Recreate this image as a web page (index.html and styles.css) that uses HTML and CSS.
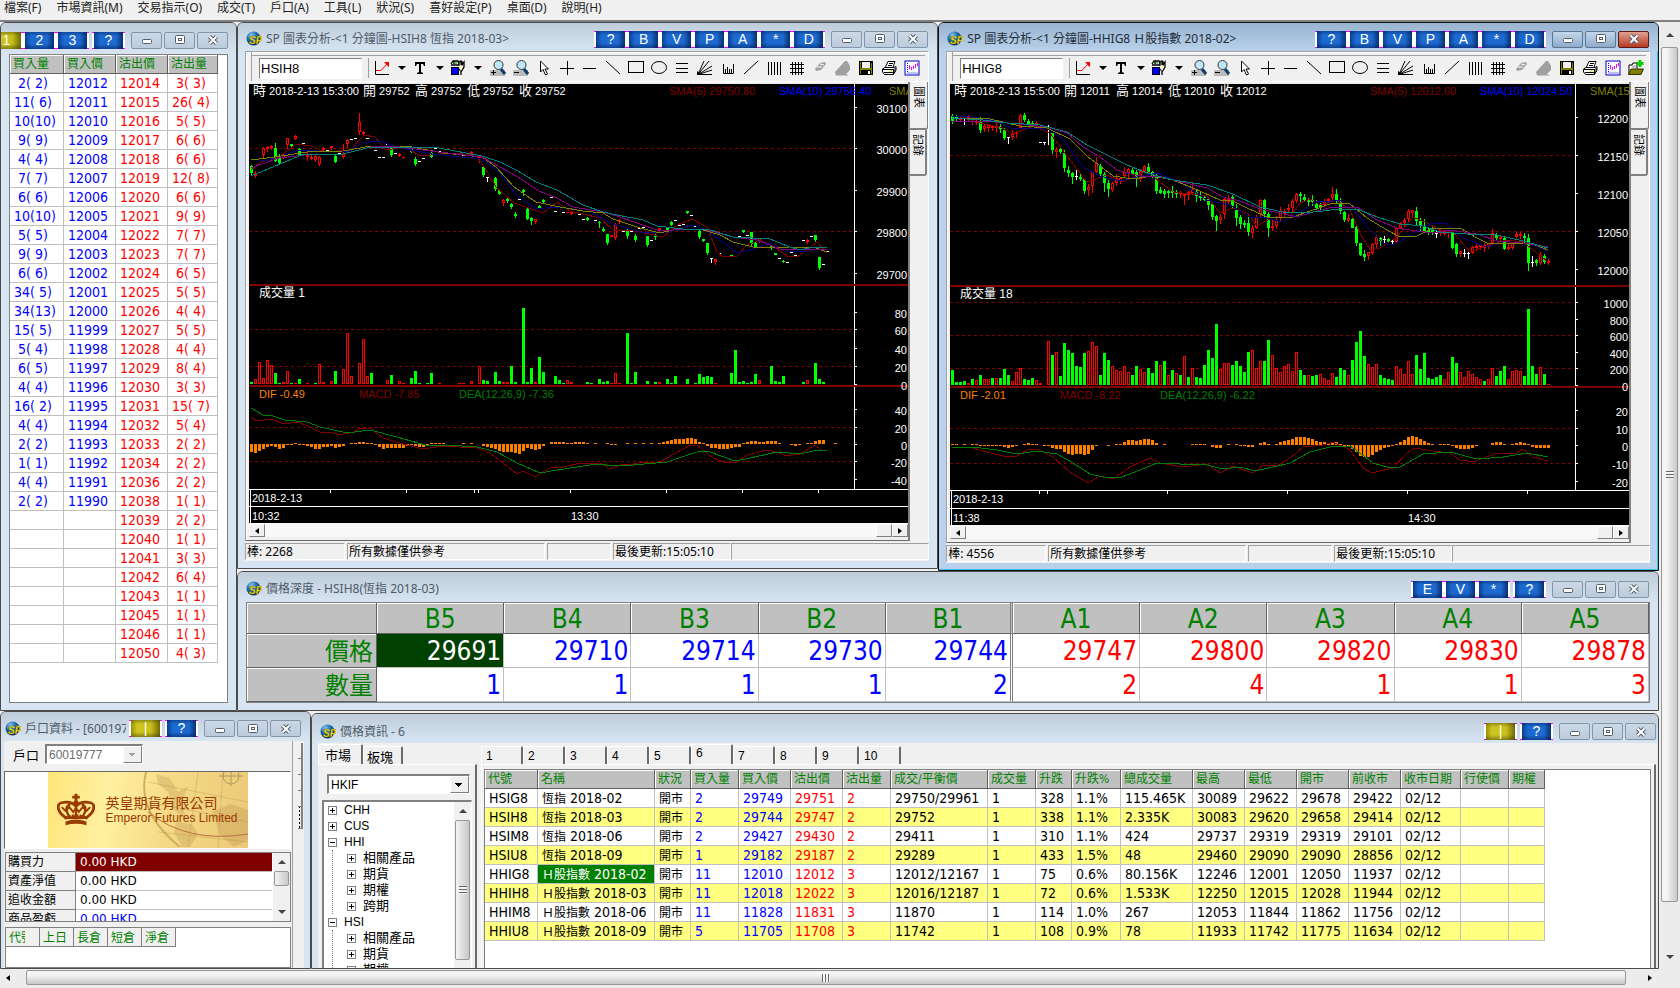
FILE: index.html
```html
<!DOCTYPE html>
<html lang="zh-Hant">

<head>
  <meta charset="UTF-8">
  <meta name="viewport" content="width=device-width, initial-scale=1.0">
  <title>SP 交易平台</title>
  <link rel="stylesheet" href="styles.css">
</head>

<body>
  <svg width="0" height="0" class="defs">
    <defs>
      <radialGradient id="ball" cx="35%" cy="25%" r="80%">
        <stop offset="0" stop-color="#7fc4ee" />
        <stop offset="0.5" stop-color="#1c62a8" />
        <stop offset="1" stop-color="#06244f" />
      </radialGradient>
    </defs>
    <symbol id="logo" viewBox="0 0 16 16">
      <circle cx="7.5" cy="7.5" r="7" fill="url(#ball)" />
      <text x="3" y="13" font-family="Liberation Sans, sans-serif" font-size="10" font-weight="bold" font-style="italic" fill="#ffe600" stroke="#7a6a00" stroke-width="0.3">SP</text>
    </symbol>
    <symbol id="min" viewBox="0 0 12 10"><rect x="1.5" y="4.5" width="9" height="4" rx="1" fill="#fff" stroke="#535e6b" /></symbol>
    <symbol id="max" viewBox="0 0 12 10"><rect x="1.5" y="0.5" width="9" height="8" rx="1" fill="#fff" stroke="#535e6b" /><rect x="4.5" y="3.5" width="3" height="2" fill="#fff" stroke="#535e6b" /></symbol>
    <symbol id="close" viewBox="0 0 12 10"><path d="M2.5 1.5L9.500 8.500M9.500 1.500L2.500 8.500" stroke="#535e6b" stroke-width="4" /><path d="M2.500 1.500L9.500 8.500M9.500 1.500L2.500 8.500" stroke="#fff" stroke-width="2" /></symbol>
    <symbol id="i-trend" viewBox="0 0 16 16"><path d="M1.500 1V14.500H15" fill="none" stroke="#000" /><path d="M2 10.500H7L13 4" fill="none" stroke="#f00" /><path d="M10 2h5v5l-2-1.500l-1.500-2z" fill="#f00" /></symbol>
    <symbol id="i-text" viewBox="0 0 16 16"><path d="M3 2H13V6H12L11 4H9V12L11 13V14H5V13L7 12V4H5L4 6H3z" /></symbol>
    <symbol id="i-tools" viewBox="0 0 16 16"><path d="M1 4L3 1H8L9 4M1 5H9M4 1V4M9 6V2L11 1V5L12 1V5L14 2V7L11 12V15M8 8L11 11" fill="none" stroke="#000" stroke-width="1.300" /><rect x="1.500" y="7.500" width="7" height="7" fill="#00f" stroke="#000" /><path d="M3 3H7" stroke="#008000" /><path d="M10 5L13 6L11 11L9 8Z" fill="#fff8c0" /></symbol>
    <symbol id="i-zoomin" viewBox="0 0 16 16"><rect x="0" y="10" width="15" height="6" fill="#bbb" /><path d="M11 9L15 14" stroke="#123b6b" stroke-width="3" /><circle cx="8.500" cy="5" r="4.500" fill="#bfe8fb" stroke="#333" /><path d="M1 12.500H6M3.500 10V15" stroke="#000" /></symbol>
    <symbol id="i-zoomout" viewBox="0 0 16 16"><rect x="0" y="10" width="15" height="6" fill="#bbb" /><path d="M11 9L15 14" stroke="#123b6b" stroke-width="3" /><circle cx="8.500" cy="5" r="4.500" fill="#bfe8fb" stroke="#333" /><path d="M1 12.500H6" stroke="#000" /></symbol>
    <symbol id="i-cursor" viewBox="0 0 16 16"><path d="M4.500 1V12L7 9.500L9.500 15L11.500 14L9 9H12.500Z" fill="#fff" stroke="#000" /></symbol>
    <symbol id="i-cross" viewBox="0 0 16 16"><path d="M1 8.500H15M8.500 1V15" stroke="#000" /></symbol>
    <symbol id="i-hline" viewBox="0 0 16 16"><path d="M1 8.500H14" stroke="#000" /></symbol>
    <symbol id="i-down" viewBox="0 0 16 16"><path d="M1 1L15 14" stroke="#000" /></symbol>
    <symbol id="i-rect" viewBox="0 0 16 16"><rect x="0.500" y="1.500" width="15" height="11" fill="none" stroke="#000" /></symbol>
    <symbol id="i-oval" viewBox="0 0 16 16"><ellipse cx="8" cy="7.500" rx="7.500" ry="6" fill="none" stroke="#000" /></symbol>
    <symbol id="i-rows" viewBox="0 0 16 16"><path d="M2 3.500H14M2 8.500H14M2 12.500H14" stroke="#000" /></symbol>
    <symbol id="i-fan" viewBox="0 0 16 16"><path d="M1 14.500L7 1M1 14.500L12 1M1 14.500L15 6M1 14.500L15 10M1 14.500H15" stroke="#000" fill="none" /><path d="M0 15V11L6 15z" /></symbol>
    <symbol id="i-comb" viewBox="0 0 16 16"><path d="M3.500 4V13.500H13.500V4M5.500 9V13M7.500 7V13M9.500 9V13M11.500 9V13" stroke="#000" fill="none" /></symbol>
    <symbol id="i-up" viewBox="0 0 16 16"><path d="M1 14L15 1" stroke="#000" /></symbol>
    <symbol id="i-vbars" viewBox="0 0 16 16"><path d="M2.500 2V15M5.500 2V15M8.500 2V15M11.500 2V15M14.500 2V15" stroke="#000" /></symbol>
    <symbol id="i-grid" viewBox="0 0 16 16"><path d="M3.500 2V15M6.500 2V15M9.500 2V15M12.500 2V15M1 4.500H15M1 8.500H15M1 12.500H15" stroke="#000" /></symbol>
    <symbol id="i-rub" viewBox="0 0 16 16"><path d="M3 9L8 3L13 2L14 4L9 10L4 11Z" fill="#a0a0a0" /><path d="M5 7L10 7M8 4L12 5" stroke="#fff" /></symbol>
    <symbol id="i-rub2" viewBox="0 0 16 16"><path d="M0 12L10 1L12 1L15 6V10L11 14L14 15.500H1Z" fill="#a0a0a0" /></symbol>
    <symbol id="i-save" viewBox="0 0 16 16"><rect x="1" y="1" width="14" height="14" fill="#000" /><rect x="4" y="2" width="8" height="6" fill="#f0f0f0" /><path d="M2.500 2V14M13.500 3V14" stroke="#808000" /><rect x="2" y="8" width="12" height="2" fill="#808000" /><rect x="10" y="11" width="2" height="3" fill="#fff" /></symbol>
    <symbol id="i-print" viewBox="0 0 16 16"><path d="M4.500 7L7 1.500H14L12 7" fill="#fff" stroke="#000" /><path d="M8 3.500H12M7 5.500H11" stroke="#000" /><path d="M1.500 9L4 7.500H13L15 6.500V10L12.500 14.500H3.500L1.500 12Z" fill="#fff" stroke="#000" /><path d="M2 9.500H12.500M3 12.500H12M12.500 9V14M14 8V12" stroke="#000" /><path d="M8 11H11" stroke="#e0d000" /></symbol>
    <symbol id="i-candle" viewBox="0 0 16 16"><rect x="1" y="1" width="14" height="14" fill="#fff" stroke="#0000c0" /><path d="M3.500 3V13H14" stroke="#00f" fill="none" stroke-dasharray="1 1" /><path d="M5.500 5V9M7.500 7V10M9.500 6V9M11.500 4V8M13.500 3V6" stroke="#f0f" /></symbol>
    <symbol id="i-open" viewBox="0 0 16 16"><path d="M1 14V5H4L5 3H9V9" fill="#fff" stroke="#000" /><path d="M0.500 14.500L3 9H15.500L13 14.500Z" fill="#808000" stroke="#333300" /><path d="M4 6H9M4 8H9" stroke="#888" /><path d="M12 0V7M9 3.500H15.500" stroke="#00d000" stroke-width="3" /></symbol>
  </svg>

  <nav class="menu">
    <a href="#">檔案(F)</a>
    <a href="#">市場資訊(M)</a>
    <a href="#">交易指示(O)</a>
    <a href="#">成交(T)</a>
    <a href="#">戶口(A)</a>
    <a href="#">工具(L)</a>
    <a href="#">狀況(S)</a>
    <a href="#">喜好設定(P)</a>
    <a href="#">桌面(D)</a>
    <a href="#">說明(H)</a>
  </nav>

  <div class="workspace">
    <main class="desktop">
      <div class="upper">

        <!-- 買賣盤 -->
        <section class="win ladder">
          <header class="title">
            <div class="skins">
              <button class="skin gold">1</button><button class="skin">2</button><button class="skin">3</button>
            </div>
            <div class="skins"><button class="skin">?</button></div>
            <div class="ctrls">
              <button><svg><use href="#min" /></svg></button>
              <button><svg><use href="#max" /></svg></button>
              <button><svg><use href="#close" /></svg></button>
            </div>
          </header>
          <div class="sheet">
            <table class="grid">
              <thead>
                <tr><th>買入量</th><th>買入價</th><th>沽出價</th><th>沽出量</th></tr>
              </thead>
              <tbody id="ladder"></tbody>
            </table>
          </div>
        </section>

        <div class="right">
          <div class="charts">

            <!-- 恆指 -->
            <section class="win chart-a">
              <header class="title">
                <svg class="logo"><use href="#logo" /></svg>
                <h2>SP 圖表分析-&lt;1 分鐘圖-HSIH8 恆指 2018-03&gt;</h2>
                <div class="skins">
                  <button class="skin">?</button><button class="skin">B</button><button class="skin">V</button><button class="skin">P</button><button class="skin">A</button><button class="skin">*</button><button class="skin">D</button>
                </div>
                <div class="ctrls">
                  <button><svg><use href="#min" /></svg></button>
                  <button><svg><use href="#max" /></svg></button>
                  <button><svg><use href="#close" /></svg></button>
                </div>
              </header>
              <div class="client">
                <div class="toolbar">
                  <input type="text" value="HSIH8" aria-label="代號">
                  <i class="sep"></i>
                  <button class="drop"><svg><use href="#i-trend" /></svg></button>
                  <button class="drop"><svg><use href="#i-text" /></svg></button>
                  <button class="drop"><svg><use href="#i-tools" /></svg></button>
                  <button><svg><use href="#i-zoomin" /></svg></button>
                  <button><svg><use href="#i-zoomout" /></svg></button>
                  <button><svg><use href="#i-cursor" /></svg></button>
                  <button><svg><use href="#i-cross" /></svg></button>
                  <button><svg><use href="#i-hline" /></svg></button>
                  <button><svg><use href="#i-down" /></svg></button>
                  <button><svg><use href="#i-rect" /></svg></button>
                  <button><svg><use href="#i-oval" /></svg></button>
                  <button><svg><use href="#i-rows" /></svg></button>
                  <button><svg><use href="#i-fan" /></svg></button>
                  <button><svg><use href="#i-comb" /></svg></button>
                  <button><svg><use href="#i-up" /></svg></button>
                  <button><svg><use href="#i-vbars" /></svg></button>
                  <button><svg><use href="#i-grid" /></svg></button>
                  <button><svg><use href="#i-rub" /></svg></button>
                  <button><svg><use href="#i-rub2" /></svg></button>
                  <button><svg><use href="#i-save" /></svg></button>
                  <button><svg><use href="#i-print" /></svg></button>
                  <button><svg><use href="#i-candle" /></svg></button>
                </div>
                <div class="body">
                  <div class="pane">
                    <div class="chart" id="chartA"></div>
                    <div class="hbar"><button class="left"></button><button class="thumb"></button><button class="next"></button></div>
                  </div>
                  <div class="sidetabs"><button class="on">圖表</button><button>記錄</button></div>
                </div>
              </div>
              <footer class="status">
                <span>棒: 2268</span><span>所有數據僅供參考</span><span></span><span>最後更新:15:05:10</span><span></span>
              </footer>
            </section>

            <!-- H股指數 -->
            <section class="win active chart-b">
              <header class="title">
                <svg class="logo"><use href="#logo" /></svg>
                <h2>SP 圖表分析-&lt;1 分鐘圖-HHIG8 Ｈ股指數 2018-02&gt;</h2>
                <div class="skins">
                  <button class="skin">?</button><button class="skin">B</button><button class="skin">V</button><button class="skin">P</button><button class="skin">A</button><button class="skin">*</button><button class="skin">D</button>
                </div>
                <div class="ctrls">
                  <button><svg><use href="#min" /></svg></button>
                  <button><svg><use href="#max" /></svg></button>
                  <button class="red"><svg><use href="#close" /></svg></button>
                </div>
              </header>
              <div class="client">
                <div class="toolbar">
                  <input type="text" value="HHIG8" aria-label="代號">
                  <i class="sep"></i>
                  <button class="drop"><svg><use href="#i-trend" /></svg></button>
                  <button class="drop"><svg><use href="#i-text" /></svg></button>
                  <button class="drop"><svg><use href="#i-tools" /></svg></button>
                  <button><svg><use href="#i-zoomin" /></svg></button>
                  <button><svg><use href="#i-zoomout" /></svg></button>
                  <button><svg><use href="#i-cursor" /></svg></button>
                  <button><svg><use href="#i-cross" /></svg></button>
                  <button><svg><use href="#i-hline" /></svg></button>
                  <button><svg><use href="#i-down" /></svg></button>
                  <button><svg><use href="#i-rect" /></svg></button>
                  <button><svg><use href="#i-oval" /></svg></button>
                  <button><svg><use href="#i-rows" /></svg></button>
                  <button><svg><use href="#i-fan" /></svg></button>
                  <button><svg><use href="#i-comb" /></svg></button>
                  <button><svg><use href="#i-up" /></svg></button>
                  <button><svg><use href="#i-vbars" /></svg></button>
                  <button><svg><use href="#i-grid" /></svg></button>
                  <button><svg><use href="#i-rub" /></svg></button>
                  <button><svg><use href="#i-rub2" /></svg></button>
                  <button><svg><use href="#i-save" /></svg></button>
                  <button><svg><use href="#i-print" /></svg></button>
                  <button><svg><use href="#i-candle" /></svg></button>
                  <button><svg><use href="#i-open" /></svg></button>
                </div>
                <div class="body">
                  <div class="pane">
                    <div class="chart" id="chartB"></div>
                    <div class="hbar"><button class="left"></button><button class="thumb"></button><button class="next"></button></div>
                  </div>
                  <div class="sidetabs"><button class="on">圖表</button><button>記錄</button></div>
                </div>
              </div>
              <footer class="status">
                <span>棒: 4556</span><span>所有數據僅供參考</span><span></span><span>最後更新:15:05:10</span><span></span>
              </footer>
            </section>
          </div>

          <!-- 價格深度 -->
          <section class="win depth">
            <header class="title">
              <svg class="logo"><use href="#logo" /></svg>
              <h2>價格深度 - HSIH8(恆指 2018-03)</h2>
              <div class="skins"><button class="skin">E</button><button class="skin">V</button><button class="skin">*</button></div>
              <div class="skins"><button class="skin">?</button></div>
              <div class="ctrls">
                <button><svg><use href="#min" /></svg></button>
                <button><svg><use href="#max" /></svg></button>
                <button><svg><use href="#close" /></svg></button>
              </div>
            </header>
            <table>
              <thead>
                <tr><th class="side"></th><th>B5</th><th>B4</th><th>B3</th><th>B2</th><th>B1</th><th>A1</th><th>A2</th><th>A3</th><th>A4</th><th>A5</th></tr>
              </thead>
              <tbody>
                <tr><th class="side">價格</th><td class="cur">29691</td><td class="bid">29710</td><td class="bid">29714</td><td class="bid">29730</td><td class="bid">29744</td><td class="ask">29747</td><td class="ask">29800</td><td class="ask">29820</td><td class="ask">29830</td><td class="ask">29878</td></tr>
                <tr><th class="side">數量</th><td class="bid">1</td><td class="bid">1</td><td class="bid">1</td><td class="bid">1</td><td class="bid">2</td><td class="ask">2</td><td class="ask">4</td><td class="ask">1</td><td class="ask">1</td><td class="ask">3</td></tr>
              </tbody>
            </table>
          </section>
        </div>
      </div>

      <div class="lower">

        <!-- 戶口資料 -->
        <section class="win account">
          <header class="title">
            <svg class="logo"><use href="#logo" /></svg>
            <h2>戶口資料 - [60019777]</h2>
            <div class="skins"><button class="skin gold">|</button></div>
            <div class="skins"><button class="skin">?</button></div>
            <div class="ctrls">
              <button><svg><use href="#min" /></svg></button>
              <button><svg><use href="#max" /></svg></button>
              <button><svg><use href="#close" /></svg></button>
            </div>
          </header>
          <div class="acc-body">
            <div class="acc-main">
              <div class="acc-row">
                <label for="acc">戶口</label>
                <span class="combo off"><select id="acc" disabled><option>60019777</option></select></span>
              </div>
              <div class="banner">
                <div class="gold-card">
                  <svg class="map" viewBox="0 0 200 75">
                    <path d="M98 0Q88 40 132 75" fill="none" stroke="#d0b060" stroke-width="2" />
                    <path d="M108 2l14 4l8 14l10-6l-6 16l4 18l-12-10l-6-18l-10-8zM128 50l16 2l6 10l-8 13h-8l-8-14zM164 40l18-8l18 6v30l-14 7l-14-12z" fill="#a07038" opacity="0.2" />
                    <path d="M100 10L200 30M100 30L200 50M110 60L200 70M150 0L140 75M175 0L170 75" stroke="#b08840" stroke-width="0.300" />
                    <circle cx="183" cy="4" r="8" fill="none" stroke="#b09860" />
                    <path d="M183 -8V14M171 4H195" stroke="#b09860" />
                    <path d="M100 40Q140 72 200 62" fill="none" stroke="#b87040" />
                  </svg>
                  <svg class="crown" viewBox="0 0 40 34">
                    <path d="M9 25C-2 17 0 9 7 9C13 8 18 11 20 13C22 11 27 8 33 9C40 9 42 17 31 25Z" fill="none" stroke="#9a3a00" stroke-width="3" />
                    <path d="M9 29Q20 25 31 29L31 33Q20 30 9 33Z" fill="#9a3a00" />
                    <path d="M13 24C8 16 10 12 14 11M27 24C32 16 30 12 26 11M20 12V24" fill="none" stroke="#9a3a00" stroke-width="2.500" />
                    <path d="M5 14L9 18L13 14L17 19L20 15L23 19L27 14L31 18L35 14" fill="none" stroke="#9a3a00" stroke-width="2" />
                    <path d="M20 0V8M16 3.500H24" stroke="#9a3a00" stroke-width="3" />
                    <circle cx="20" cy="10" r="3" fill="#9a3a00" />
                    <path d="M8 26Q20 20 32 26" fill="none" stroke="#9a3a00" stroke-width="3" stroke-dasharray="3 1" />
                  </svg>
                  <p class="co">英皇期貨有限公司<br><span>Emperor Futures Limited</span></p>
                </div>
              </div>
              <div class="balance">
                <table>
                  <tr class="sel"><th>購買力</th><td>0.00 HKD</td></tr>
                  <tr><th>資產淨值</th><td>0.00 HKD</td></tr>
                  <tr><th>追收金額</th><td>0.00 HKD</td></tr>
                  <tr class="blue"><th>商品盈虧</th><td>0.00 HKD</td></tr>
                </table>
                <div class="vbar"><button class="up"></button><button class="thumb"></button><button class="dn"></button></div>
              </div>
              <div class="positions">
                <table>
                  <tr><th><div>代號</div></th><th>上日</th><th>長倉</th><th>短倉</th><th>淨倉</th></tr>
                </table>
              </div>
            </div>
            <div class="edge"><i></i><i></i><i></i><i></i><b></b></div>
          </div>
        </section>

        <!-- 價格資訊 -->
        <section class="win quotes">
          <header class="title">
            <svg class="logo"><use href="#logo" /></svg>
            <h2>價格資訊 - 6</h2>
            <div class="skins"><button class="skin gold">|</button></div>
            <div class="skins"><button class="skin">?</button></div>
            <div class="ctrls">
              <button><svg><use href="#min" /></svg></button>
              <button><svg><use href="#max" /></svg></button>
              <button><svg><use href="#close" /></svg></button>
            </div>
          </header>
          <div class="quotes-body">
            <aside class="market">
              <div class="tabs zh"><button class="on">市場</button><button>板塊</button></div>
              <div class="market-panel">
                <span class="combo"><select aria-label="市場"><option>HKIF</option></select></span>
                <div class="treebox">
                  <ul class="tree">
                    <li><button class="exp plus"></button>CHH</li>
                    <li><button class="exp plus"></button>CUS</li>
                    <li><button class="exp"></button>HHI
                      <ul>
                        <li><button class="exp plus"></button>相關產品</li>
                        <li><button class="exp plus"></button>期貨</li>
                        <li><button class="exp plus"></button>期權</li>
                        <li><button class="exp plus"></button>跨期</li>
                      </ul>
                    </li>
                    <li><button class="exp"></button>HSI
                      <ul>
                        <li><button class="exp plus"></button>相關產品</li>
                        <li><button class="exp plus"></button>期貨</li>
                        <li><button class="exp plus"></button>期權</li>
                      </ul>
                    </li>
                  </ul>
                  <div class="vbar tall"><button class="up"></button><button class="thumb"></button></div>
                </div>
              </div>
            </aside>
            <div class="pages">
              <div class="tabs"><button>1</button><button>2</button><button>3</button><button>4</button><button>5</button><button class="on">6</button><button>7</button><button>8</button><button>9</button><button>10</button></div>
              <div class="pages-panel">
                <div class="sheet">
                  <table class="grid" id="quotes">
                    <thead>
                      <tr><th class="w53">代號</th><th class="w117">名稱</th><th class="w36">狀況</th><th class="w48">買入量</th><th class="w52">買入價</th><th class="w52">沽出價</th><th class="w48">沽出量</th><th class="w97">成交/平衡價</th><th class="w48">成交量</th><th class="w36">升跌</th><th class="w49">升跌%</th><th class="w72">總成交量</th><th class="w52">最高</th><th class="w52">最低</th><th class="w52">開市</th><th class="w52">前收市</th><th class="w60">收市日期</th><th class="w48">行使價</th><th class="w36">期權</th></tr>
                    </thead>
                    <tbody></tbody>
                  </table>
                </div>
              </div>
            </div>
          </div>
        </section>
      </div>
    </main>
    <div class="page-vbar"><button class="up"></button><button class="thumb"></button><button class="dn"></button></div>
  </div>
  <div class="page-hbar"><button class="left"></button><button class="thumb"></button><button class="next"></button></div>

  <script src="script.js"></script>
</body>

</html>
```

FILE: styles.css
```css
* {
  box-sizing: border-box;
}

html,
body {
  height: 100%;
}

body {
  margin: 0;
  display: flex;
  flex-direction: column;
  overflow: hidden;
  background: #f0f0f0;
  color: #000;
  font-family: "Noto Sans", "Noto Sans CJK TC", sans-serif;
  font-size: 12px;
}

button,
input,
select {
  margin: 0;
  padding: 0;
  border: 0;
  border-radius: 0;
  background: none;
  color: inherit;
  font-family: inherit;
  font-size: 12px;
}

h2,
p,
ul {
  margin: 0;
  padding: 0;
  list-style: none;
}

table {
  border-collapse: separate;
  border-spacing: 0;
}

.defs {
  position: absolute;
}

/* menu */
.menu {
  flex: none;
  display: flex;
  gap: 15px;
  height: 22px;
  padding: 0 4px;
  line-height: 16px;
  border-bottom: 2px solid #808080;
}

.menu a {
  color: #222;
  text-decoration: none;
}

.workspace {
  flex: 1;
  min-height: 0;
  display: flex;
}

.desktop {
  flex: 1;
  min-width: 0;
  display: flex;
  flex-direction: column;
  overflow: hidden;
  padding-right: 1px;
}

.upper,
.charts {
  flex: none;
  display: flex;
  align-items: flex-start;
}

.upper {
  align-items: stretch;
}

.right {
  flex: 1;
  min-width: 0;
}

.lower {
  flex: 1;
  min-height: 0;
  display: flex;
}

/* windows */
.win {
  display: flex;
  flex-direction: column;
  min-width: 0;
  padding: 0 8px 7px 7px;
  background: #d7e4f2;
  border: 1px solid #4b4b4b;
  border-radius: 6px 6px 0 0;
}

.win.active {
  background: #b9d1ea;
  border-color: #111;
  box-shadow: inset -1px -1px #33c0e0;
}

.ladder {
  flex: none;
  width: 237px;
  padding-left: 8px;
}

.chart-a {
  flex: 701 1 0;
}

.chart-b {
  flex: 721 1 0;
}

.title {
  flex: none;
  display: flex;
  align-items: center;
  height: 28px;
  margin: 0 -8px 0 -7px;
  padding: 4px 9px 0 8px;
  border-radius: 5px 5px 0 0;
  background: linear-gradient(#bfcddb, #d7e4f2);
  overflow: hidden;
}

.active .title {
  background: linear-gradient(#99b4d1, #b9d1ea);
}

.ladder .title {
  height: 31px;
  margin-left: -8px;
  padding-top: 3px;
  padding-right: 8px;
  justify-content: flex-end;
}

.ladder .title .skins,
.ladder .title .ctrls {
  flex: none;
}

.logo {
  flex: none;
  width: 16px;
  height: 16px;
  margin-right: 4px;
}

.title h2 {
  flex: 1;
  min-width: 0;
  overflow: hidden;
  white-space: nowrap;
  font-size: 12px;
  font-weight: normal;
  line-height: 18px;
  color: #4e5a66;
}

.active .title h2 {
  color: #222c38;
}

.skins {
  display: flex;
  margin-left: 3px;
}

.skin {
  width: 33px;
  height: 17px;
  color: #fff;
  font-family: "Liberation Sans", sans-serif;
  font-size: 14px;
  line-height: 17px;
  background:
    linear-gradient(#f0f, #f0f) left top / 2px 1px no-repeat,
    linear-gradient(#f0f, #f0f) right top / 2px 1px no-repeat,
    linear-gradient(#f0f, #f0f) left bottom / 2px 1px no-repeat,
    linear-gradient(#f0f, #f0f) right bottom / 2px 1px no-repeat,
    linear-gradient(#fff, #fff) left / 2px 100% no-repeat,
    linear-gradient(#fff, #fff) right / 2px 100% no-repeat,
    linear-gradient(to bottom, rgba(0, 20, 80, 0.4), transparent 4px, transparent 12px, rgba(0, 20, 80, 0.5)),
    linear-gradient(to right, #0c3f94 2px, #1c6ad0 8px, #1c6ad0 24px, #0a2f70 31px);
}

.skin.gold {
  background:
    linear-gradient(#f0f, #f0f) left top / 2px 1px no-repeat,
    linear-gradient(#f0f, #f0f) right top / 2px 1px no-repeat,
    linear-gradient(#f0f, #f0f) left bottom / 2px 1px no-repeat,
    linear-gradient(#f0f, #f0f) right bottom / 2px 1px no-repeat,
    linear-gradient(#fff, #fff) left / 2px 100% no-repeat,
    linear-gradient(#fff, #fff) right / 2px 100% no-repeat,
    linear-gradient(to bottom, rgba(60, 60, 0, 0.4), transparent 4px, transparent 12px, rgba(60, 60, 0, 0.5)),
    linear-gradient(to right, #96900a 2px, #cfc622 8px, #c8bf1c 22px, #6e6a08 31px);
}

.ctrls {
  display: flex;
  gap: 2px;
  margin-left: 6px;
}

.ctrls button {
  display: flex;
  align-items: center;
  justify-content: center;
  width: 31px;
  height: 17px;
  border: 1px solid #8694a8;
  border-radius: 2px;
  background: linear-gradient(#cbd8e6, #bccbdc);
}

.active .ctrls button {
  border-color: #5d7591;
  background: linear-gradient(#c3d6ea, #8fabc9);
}

.active .ctrls .red {
  border-color: #5c1a12;
  background: linear-gradient(#e0a093, #b83a22);
}

.ctrls svg {
  width: 12px;
  height: 10px;
}

/* data grids */
.sheet {
  flex: 1;
  background: #fff;
  border: 1px solid #808080;
}

.grid {
  table-layout: fixed;
  font-family: "DejaVu Sans Condensed", "Noto Sans", "Noto Sans CJK TC", sans-serif;
  font-size: 14px;
}

.grid th {
  height: 19px;
  padding: 0 0 0 3px;
  border: 1px solid #606060;
  border-width: 0 1px 1px 0;
  box-shadow: inset 1px 1px #fff;
  background: #c0c0c0;
  color: #008000;
  font-size: 12px;
  font-weight: normal;
  line-height: 18px;
  text-align: left;
  white-space: nowrap;
}

.grid td {
  height: 19px;
  padding: 0 0 0 4px;
  border: 1px solid #c0c0c0;
  border-width: 0 1px 1px 0;
  line-height: 18px;
  white-space: pre;
}

.grid .zh {
  font-size: 12px;
  line-height: 12px;
}

.bid {
  color: #00f;
}

.ask {
  color: #f00;
}

.ladder .grid {
  width: 208px;
}

.ladder .grid th {
  width: 52px;
}

.ladder .grid th:first-child {
  width: 54px;
}

.ladder .grid th:last-child {
  width: 50px;
}

.w36 { width: 36px; }
.w48 { width: 48px; }
.w49 { width: 49px; }
.w52 { width: 52px; }
.w53 { width: 53px; }
.w60 { width: 60px; }
.w72 { width: 72px; }
.w97 { width: 97px; }
.w117 { width: 117px; }

#quotes {
  width: 1060px;
}

#quotes tbody tr:nth-child(even) {
  background: #ffff80;
}

#quotes .picked {
  background: #008000;
  color: #fff;
}

/* chart window */
.client {
  background: #f0f0f0;
  border: 1px solid #a0a0a0;
  border-right-color: #fff;
  border-bottom: 0;
  box-shadow: inset 1px 1px #fff;
}

.toolbar {
  display: flex;
  align-items: center;
  height: 29px;
  margin: 0 3px 0 5px;
  padding: 3px 0 0 7px;
  border-left: 1px solid #a0a0a0;
  background: linear-gradient(#a0a0a0, #a0a0a0) 0 3px / 100% 1px no-repeat;
  overflow: hidden;
}

.toolbar input {
  flex: none;
  width: 103px;
  height: 21px;
  padding: 0 1px;
  border: 1px solid #808080;
  border-right-color: #fff;
  border-bottom-color: #fff;
  background: #fff;
  font-family: "Liberation Sans", sans-serif;
  font-size: 13px;
}

.sep {
  flex: none;
  width: 1px;
  height: 20px;
  margin: 0 3px 0 6px;
  background: #a0a0a0;
}

.toolbar button {
  flex: none;
  display: flex;
  align-items: center;
  justify-content: center;
  width: 23px;
  height: 22px;
}

.toolbar .drop {
  width: 38px;
  justify-content: flex-start;
  padding-left: 2px;
}

.toolbar .drop::after {
  content: "";
  margin-left: 8px;
  border: 4px solid transparent;
  border-top-color: #000;
  border-bottom: 0;
}

.toolbar svg {
  width: 16px;
  height: 16px;
}

.body {
  display: flex;
  border-top: 1px solid #fff;
}

.pane {
  flex: 1;
  min-width: 0;
  padding: 2px 0 3px 3px;
  border-bottom: 1px solid #696969;
}

.chart {
  overflow: hidden;
  background: #000;
}

.chart svg {
  display: block;
  font-family: "Liberation Sans", "Noto Sans CJK TC", sans-serif;
  font-size: 11px;
}

.chart .wide,
.chart tspan {
  font-size: 12px;
}

.chart tspan {
  font-size: 13px;
}

.chart .axis {
  text-anchor: end;
}

.sidetabs {
  flex: none;
  width: 20px;
  border-left: 2px solid #808080;
}

.sidetabs button {
  display: block;
  width: 17px;
  height: 46px;
  padding-top: 4px;
  border: 1px solid #808080;
  border-width: 0 2px 2px 0;
  border-radius: 0 0 3px 0;
  font-size: 11px;
  line-height: 14px;
  writing-mode: vertical-rl;
  text-orientation: sideways;
  text-align: left;
}

.sidetabs .on {
  width: 18px;
  height: 48px;
  border-right-width: 1px;
}

.hbar {
  display: flex;
  height: 14px;
  padding: 1px 0 0;
  background: #f8f8f8;
}

.hbar button {
  width: 16px;
  height: 13px;
  border: 1px solid #808080;
  border-top-color: #fff;
  border-left-color: #fff;
  background: #f0f0f0;
}

.hbar .left {
  margin-right: auto;
}

.left,
.next,
.up,
.dn {
  display: flex;
  align-items: center;
  justify-content: center;
}

.left::after,
.next::after {
  content: "";
  border: 3px solid transparent;
}

.left::after {
  border-right: 4px solid #000;
  border-left: 0;
}

.next::after {
  border-left: 4px solid #000;
  border-right: 0;
}

.status {
  display: flex;
  gap: 2px;
  height: 20px;
  padding-top: 2px;
  background: #f0f0f0;
  line-height: 15px;
}

.status span {
  height: 17px;
  padding-left: 1px;
  border: 1px solid #a0a0a0;
  border-right-color: #fff;
  border-bottom-color: #fff;
  white-space: nowrap;
}

.status span:nth-child(1) {
  width: 100px;
}

.status span:nth-child(2) {
  width: 198px;
}

.status span:nth-child(3) {
  width: 64px;
}

.chart-b .status span:nth-child(3) {
  width: 84px;
}

.status span:nth-child(4) {
  width: 118px;
}

.status span:nth-child(5) {
  flex: 1;
  margin-left: -2px;
}

/* depth */
.depth {
  padding-left: 8px;
}

.depth .title {
  height: 30px;
  margin-left: -8px;
}

.depth table {
  width: 100%;
  table-layout: fixed;
  border: 1px solid #808080;
  background: #fff;
  font-family: "DejaVu Sans Condensed", "Noto Sans", "Noto Sans CJK TC", sans-serif;
  font-size: 26px;
  line-height: 30px;
}

.depth th {
  height: 31px;
  padding: 2px 0 0;
  border: 1px solid #606060;
  border-width: 0 1px 1px 0;
  box-shadow: inset 1px 1px #fff;
  background: #c0c0c0;
  color: #008000;
  font-weight: normal;
  line-height: 28px;
}

.depth .side {
  width: 130px;
  padding-right: 3px;
  font-size: 24px;
  text-align: right;
}

.depth td {
  height: 34px;
  padding: 0 2px 0 0;
  border: 1px solid #c0c0c0;
  border-width: 0 1px 1px 0;
  text-align: right;
}

.depth th:nth-child(6),
.depth td:nth-child(6) {
  border-right: 3px double #808080;
}

.depth .cur {
  background: #004000;
  color: #fff;
}

/* account */
.account {
  flex: none;
  width: 311px;
  padding: 0 6px 0 3px;
}

.account .title {
  height: 29px;
  margin: 0 -6px 0 -3px;
  padding-left: 4px;
}

.acc-body {
  flex: 1;
  min-height: 0;
  display: flex;
  background: #f0f0f0;
}

.acc-main {
  flex: 1;
  min-width: 0;
  display: flex;
  flex-direction: column;
  border-right: 1px solid #a0a0a0;
}

.acc-row {
  display: flex;
  align-items: center;
  gap: 6px;
  height: 30px;
  padding: 0 0 4px 9px;
  font-size: 13px;
}

.combo {
  display: flex;
  flex: none;
  height: 20px;
  border: 2px solid #808080;
  border-right: 1px solid #fff;
  border-bottom: 1px solid #fff;
  background: #fff;
}

.combo select {
  flex: 1;
  min-width: 0;
  appearance: none;
  padding-left: 2px;
  font-family: "Liberation Sans", sans-serif;
}

.combo::after {
  content: "";
  width: 17px;
  border: 1px solid #808080;
  border-top-color: #fff;
  border-left-color: #fff;
  background: linear-gradient(to bottom left, #000 50%, transparent 50%) 4px 6px / 4px 4px no-repeat, linear-gradient(to bottom right, #000 50%, transparent 50%) 8px 6px / 4px 4px no-repeat, #f0f0f0;
}

.combo.off {
  width: 98px;
  color: #6d6d6d;
}

.combo.off select {
  opacity: 1;
  color: #6d6d6d;
}

.combo.off::after {
  background: linear-gradient(to bottom left, #a0a0a0 50%, transparent 50%) 4px 6px / 4px 4px no-repeat, linear-gradient(to bottom right, #a0a0a0 50%, transparent 50%) 8px 6px / 4px 4px no-repeat, #f0f0f0;
}

.banner {
  display: flex;
  justify-content: center;
  height: 78px;
  margin-right: 1px;
  border: 1px solid #696969;
  border-right-color: #fff;
  border-bottom-color: #fff;
  background: #fff;
}

.gold-card {
  position: relative;
  display: flex;
  align-items: center;
  gap: 11px;
  width: 200px;
  padding-left: 9px;
  background: linear-gradient(100deg, #ffe57a, #fff0a0 30%, #f5da85 60%, #ebc877);
}

.map {
  position: absolute;
  inset: 0;
}

.crown {
  position: relative;
  flex: none;
  width: 38px;
  height: 34px;
}

.co {
  position: relative;
  color: #9a3a00;
  font-family: "Liberation Sans", "Noto Sans CJK TC", sans-serif;
  font-size: 14px;
  line-height: 14px;
  white-space: nowrap;
}

.co span {
  font-size: 12px;
}

.balance {
  flex: none;
  display: flex;
  height: 70px;
  margin: 3px 1px 5px;
  border: 1px solid #808080;
  background: #fff;
  overflow: hidden;
}

.balance table {
  flex: 1;
  font-family: "DejaVu Sans", "Noto Sans CJK TC", sans-serif;
}

.balance th {
  width: 70px;
  height: 19px;
  padding: 0 0 0 2px;
  border: 1px solid #808080;
  border-width: 0 1px 1px 0;
  background: #f0f0f0;
  font-weight: normal;
  line-height: 18px;
  text-align: left;
}

.balance td {
  padding: 0 0 0 4px;
  border-bottom: 1px solid #c0c0c0;
}

.balance .sel td {
  background: #800000;
  color: #fff;
}

.balance .blue td {
  color: #00f;
}

.vbar {
  flex: none;
  display: flex;
  flex-direction: column;
  width: 17px;
  margin-left: 1px;
  background: #f0f0f0;
}

.vbar .up,
.vbar .dn {
  width: 17px;
  height: 18px;
}

.up::after,
.dn::after {
  content: "";
  border: 4px solid transparent;
}

.up::after {
  border-top: 0;
  border-bottom-color: #444;
}

.dn::after {
  border-bottom: 0;
  border-top-color: #444;
}

.vbar .dn {
  margin-top: auto;
}

.vbar .thumb {
  width: 15px;
  height: 15px;
  margin: 0 1px;
  border: 1px solid #979797;
  border-radius: 2px;
  background: linear-gradient(to right, #f4f4f4, #c8c8c8);
}

.vbar.tall .thumb {
  height: 140px;
}

.vbar.tall .thumb::after,
.page-vbar .thumb::after {
  content: "";
  display: block;
  width: 8px;
  height: 8px;
  margin: auto;
  background: repeating-linear-gradient(#666 0 1px, #f4f4f4 1px 3px);
}

.positions {
  flex: 1;
  margin: 0 1px;
  border: 1px solid #808080;
  background: #fff;
}

.positions table {
  width: 170px;
  table-layout: fixed;
}

.positions th {
  height: 19px;
  padding: 0 0 0 3px;
  border: 1px solid #808080;
  border-width: 0 1px 1px 0;
  background: #f0f0f0;
  color: #008000;
  font-weight: normal;
  line-height: 17px;
  text-align: left;
  white-space: nowrap;
}

.positions th div {
  width: 16px;
  overflow: hidden;
}

.edge {
  width: 11px;
  padding: 2px 1px 0 5px;
}

.edge i,
.edge b {
  display: block;
  height: 16px;
  border-right: 2px solid #808080;
  border-bottom: 1px solid #808080;
}

.edge b {
  height: 22px;
  background: radial-gradient(#000 30%, transparent 35%) 0 6px / 3px 4px repeat-y;
}

/* quotes */
.quotes {
  flex: 1;
  margin-top: 2px;
  padding: 0 1px 0 6px;
}

.quotes .title {
  height: 29px;
  margin: 0 -1px 0 -6px;
  padding-right: 2px;
  padding-top: 6px;
}

.quotes-body {
  flex: 1;
  min-height: 0;
  display: flex;
  padding-top: 1px;
  background: #f0f0f0;
}

.tabs {
  display: flex;
  align-items: flex-end;
  height: 20px;
  font-family: "Liberation Sans", "Noto Sans CJK TC", sans-serif;
}

.tabs button {
  width: 42px;
  height: 18px;
  padding-left: 4px;
  border: 1px solid #fff;
  border-right: 2px solid #696969;
  border-bottom: 0;
  border-radius: 2px 2px 0 0;
  text-align: left;
}

.tabs .on {
  height: 20px;
  padding-bottom: 3px;
}

.tabs.zh button {
  width: 40px;
  padding-left: 3px;
  font-size: 13px;
}

.tabs.zh .on {
  width: 45px;
  padding-left: 6px;
}

.market {
  flex: none;
  width: 159px;
  display: flex;
  flex-direction: column;
}

.market-panel {
  flex: 1;
  min-height: 0;
  display: flex;
  flex-direction: column;
  padding: 9px 3px 0 4px;
  border-top: 1px solid #fff;
  border-right: 2px solid #696969;
}

.market-panel .combo {
  margin: 0 2px 6px 5px;
}

.treebox {
  flex: 1;
  min-height: 0;
  display: flex;
  border: 2px solid #808080;
  border-right: 1px solid #fff;
  border-bottom: 0;
  background: #fff;
  overflow: hidden;
}

.tree {
  flex: 1;
  padding-left: 4px;
  font-family: "Liberation Sans", "Noto Sans CJK TC", sans-serif;
  font-size: 13px;
  line-height: 16px;
}

.tree > li {
  font-size: 12px;
}

.tree li ul {
  margin-left: 4px;
  padding-left: 14px;
  border-left: 1px dotted #808080;
  font-size: 13px;
}

.exp {
  width: 9px;
  height: 9px;
  margin-right: 7px;
  border: 1px solid #808080;
  background: linear-gradient(#000, #000) center / 5px 1px no-repeat, #fff;
}

.exp.plus {
  background: linear-gradient(#000, #000) center / 5px 1px no-repeat, linear-gradient(#000, #000) center / 1px 5px no-repeat, #fff;
}

.pages {
  flex: 1;
  min-width: 0;
  display: flex;
  flex-direction: column;
  padding: 0 1px 0 4px;
}

.pages-panel {
  flex: 1;
  min-height: 0;
  display: flex;
  padding: 4px 3px 0 2px;
  border: 1px solid #fff;
  border-right: 2px solid #696969;
  border-bottom: 0;
}

.pages .sheet {
  border-bottom: 0;
}

/* page scrollbars */
.page-vbar {
  flex: none;
  display: flex;
  flex-direction: column;
  width: 20px;
  padding: 0 2px 0 1px;
  background: #ececec;
}

.page-vbar .up,
.page-vbar .dn {
  height: 25px;
}

.page-vbar .thumb {
  flex: 1;
  margin-bottom: 42px;
  border: 1px solid #979797;
  border-radius: 2px;
  background: linear-gradient(to right, #f4f4f4 30%, #c8c8c8);
}

.page-hbar {
  flex: none;
  display: flex;
  height: 19px;
  padding: 1px 22px 3px 0;
  background: #ececec;
}

.page-hbar .left {
  width: 16px;
  margin-right: 10px;
}

.page-hbar .next {
  width: 16px;
  margin-left: 16px;
}

.page-hbar .thumb {
  flex: 1;
  border: 1px solid #979797;
  border-radius: 2px;
  background: linear-gradient(#f4f4f4 30%, #c8c8c8);
}

.page-hbar .thumb::after {
  content: "";
  display: block;
  width: 8px;
  height: 8px;
  margin: auto;
  background: repeating-linear-gradient(to right, #666 0 1px, #f4f4f4 1px 3px);
}
```

FILE: script.js
```js
// ---------- ladder ----------
const bids = ' 2( 2),11( 6),10(10), 9( 9), 4( 4), 7( 7), 6( 6),10(10), 5( 5), 9( 9), 6( 6),34( 5),34(13),15( 5), 5( 4), 6( 5), 4( 4),16( 2), 4( 4), 2( 2), 1( 1), 4( 4), 2( 2)'.split(',');
const asks = ' 3( 3),26( 4), 5( 5), 6( 6), 6( 6),12( 8), 6( 6), 9( 9), 7( 7), 7( 7), 6( 5), 5( 5), 4( 4), 5( 5), 4( 4), 8( 4), 3( 3),15( 7), 5( 4), 2( 2), 2( 2), 2( 2), 1( 1), 2( 2), 1( 1), 3( 3), 6( 4), 1( 1), 1( 1), 1( 1), 4( 3)'.split(',');
const farAsks = [12036, 12038, 12039, 12040, 12041, 12042, 12043, 12045, 12046, 12050];

let rows = '';
for (let i = 0; i < asks.length; i++) {
  let askPrice = i < 21 ? 12014 + i : farAsks[i - 21];
  let bidPrice = i < bids.length ? 12012 - i : '';
  rows += `<tr><td class="bid">${bids[i] || ''}</td><td class="bid">${bidPrice}</td><td class="ask">${askPrice}</td><td class="ask">${asks[i]}</td></tr>`;
}
document.getElementById('ladder').innerHTML = rows;

// ---------- quotes ----------
const quotes = [
  ['HSIG8', '恆指', '2018-02', '2', '29749', '29751', '2', '29750/29961', '1', '328', '1.1%', '115.465K', '30089', '29622', '29678', '29422'],
  ['HSIH8', '恆指', '2018-03', '2', '29744', '29747', '2', '29752', '1', '338', '1.1%', '2.335K', '30083', '29620', '29658', '29414'],
  ['HSIM8', '恆指', '2018-06', '2', '29427', '29430', '2', '29411', '1', '310', '1.1%', '424', '29737', '29319', '29319', '29101'],
  ['HSIU8', '恆指', '2018-09', '1', '29182', '29187', '2', '29289', '1', '433', '1.5%', '48', '29460', '29090', '29090', '28856'],
  ['HHIG8', 'Ｈ股指數', '2018-02', '11', '12010', '12012', '3', '12012/12167', '1', '75', '0.6%', '80.156K', '12246', '12001', '12050', '11937'],
  ['HHIH8', 'Ｈ股指數', '2018-03', '11', '12018', '12022', '3', '12016/12187', '1', '72', '0.6%', '1.533K', '12250', '12015', '12028', '11944'],
  ['HHIM8', 'Ｈ股指數', '2018-06', '11', '11828', '11831', '3', '11870', '1', '114', '1.0%', '267', '12053', '11844', '11862', '11756'],
  ['HHIU8', 'Ｈ股指數', '2018-09', '5', '11705', '11708', '3', '11742', '1', '108', '0.9%', '78', '11933', '11742', '11775', '11634']
];

rows = '';
for (const q of quotes) {
  let picked = q[0] === 'HHIG8' ? ' class="picked"' : '';
  rows += `<tr><td>${q[0]}</td><td${picked}><span class="zh">${q[1]}</span> ${q[2]}</td><td><span class="zh">開市</span></td>`;
  rows += `<td class="bid">${q[3]}</td><td class="bid">${q[4]}</td><td class="ask">${q[5]}</td><td class="ask">${q[6]}</td>`;
  for (let i = 7; i < q.length; i++) {
    rows += `<td>${q[i]}</td>`;
  }
  rows += '<td>02/12</td><td></td><td></td></tr>';
}
document.querySelector('#quotes tbody').innerHTML = rows;

// ---------- charts ----------
const COLORS = { r: '#ff0000', g: '#00ff00', w: '#ffffff' };
const SMA = ['#800000', '#000080', '#808000', '#800080', '#008080'];
const PITCH = 4;

// candle: "index colour high bodyTop bodyBottom low", thirds of a pixel, 252 is the top of the chart
const chartA = {
  height: 439, sep: [201, 302], dates: [405, 422], volBase: 300, histBase: 360,
  head: ['時 2018-2-13 15:3:00', '開 29752', '高 29752', '低 29752', '收 29752'],
  sma: ['SMA(5) 29750.80', 'SMA(10) 29756.40', 'SMA(15)'],
  vol: '成交量 1', macd: ['DIF -0.49', 'MACD -7.85', 'DEA(12,26,9) -7.36'],
  axis: [[23, '30100'], [64, '30000', 1], [106, '29900'], [147, '29800', 1], [189, '29700'],
    [228, '80'], [245, '60', 1], [264, '40'], [282, '20', 1], [300, '0'],
    [325, '40'], [343, '20', 1], [360, '0'], [377, '-20', 1], [395, '-40']],
  ticks: [81, 157, 225, 229, 321, 417, 493, 569],
  times: [[3, '10:32'], [322, '13:30']],
  candles: `0 g 495 497 517 522,1 r 513 518 526 531,3 r 442 445 463 470,4 r 437 440 445 452,5 r 436 438 441 446,6 g 430 443 480 482,7 g 463 472 487 493,8 r 460 463 470 474,9 r 413 415 433 445,10 g 431 432 435 437,11 r 404 407 414 418,12 g 443 446 463 465,13 w 430 430 430 430,14 r 455 464 468 480,15 r 464 470 474 478,16 r 462 468 478 484,17 r 467 472 488 494,18 r 441 443 447 454,19 w 451 451 451 451,20 r 437 439 441 446,21 g 463 468 482 487,22 w 460 460 460 460,23 r 433 463 468 475,24 r 417 420 430 440,25 w 417 417 417 417,26 w 415 415 415 415,27 r 339 367 394 403,28 r 392 395 398 402,29 w 415 415 415 415,31 w 450 450 450 450,32 w 471 471 471 471,33 w 471 471 471 471,34 w 433 433 433 433,35 g 436 438 462 468,36 w 460 460 460 460,37 r 460 463 466 468,38 r 470 471 472 473,40 g 447 448 453 456,41 g 472 476 488 494,42 w 483 483 483 483,43 w 475 475 475 475,44 w 440 440 440 440,45 g 456 459 468 472,46 w 443 443 443 443,47 w 452 452 452 452,49 w 458 458 458 458,51 w 463 463 463 463,53 w 466 466 466 466,55 r 454 456 459 462,57 r 467 472 475 486,58 g 496 500 523 529,59 w 530 532 532 542,61 g 530 533 564 570,62 g 567 570 580 582,63 r 596 599 605 615,64 g 591 598 600 607,65 g 610 613 619 625,66 g 636 643 645 652,67 w 597 597 597 597,68 g 567 570 574 585,69 g 625 628 653 658,70 g 652 655 659 672,71 r 656 658 662 670,72 g 614 619 621 624,73 g 597 600 602 606,75 w 592 592 592 592,76 w 634 634 634 634,78 w 636 636 636 636,79 r 636 636 637 637,80 r 634 636 638 641,81 w 628 628 628 628,82 w 643 643 643 643,83 w 657 657 657 657,84 g 651 655 656 661,86 w 661 661 661 661,87 g 662 665 667 682,88 g 681 686 689 694,89 g 701 703 727 731,90 r 706 706 707 707,91 r 668 675 711 717,92 r 657 660 662 668,93 w 694 694 694 694,94 g 688 690 705 715,95 w 694 694 694 694,96 g 703 707 718 723,97 w 685 685 685 685,98 w 682 682 682 682,99 g 707 709 732 738,100 w 720 720 720 720,101 g 701 704 707 717,102 r 685 685 686 686,104 g 684 685 686 690,105 g 662 665 672 675,106 w 661 661 661 661,107 w 676 676 676 676,108 w 673 673 673 673,109 g 632 634 636 640,110 w 646 646 646 646,111 w 678 678 678 678,112 g 691 694 709 714,113 g 717 718 720 723,114 g 729 730 756 762,115 w 774 775 775 785,116 r 776 778 784 792,117 w 760 760 760 760,118 w 768 768 768 768,119 w 767 767 767 767,120 g 766 766 767 767,121 w 768 768 768 768,122 w 709 709 709 709,123 g 690 691 692 695,124 w 706 706 706 706,125 g 696 697 728 736,126 g 726 728 737 742,127 r 713 715 720 727,128 w 714 714 714 714,129 w 733 733 733 733,130 g 735 739 740 746,131 g 760 760 761 761,132 w 775 775 775 775,133 g 780 782 783 787,134 w 787 787 787 787,135 w 757 757 757 757,136 w 766 766 766 766,138 w 721 721 721 721,139 r 717 719 723 730,140 w 709 709 709 709,141 g 704 706 717 723,142 g 770 771 801 806,143 w 793 793 793 793,144 w 754 754 754 754`,
  lines: [
    '2,86 12,78 30,73 47,60 62,62 76,68 101,66 115,51 126,53 137,66 155,63 172,72 201,69 226,71 233,79 247,103 265,119 294,129 308,118 321,127 351,134 364,146 381,146 414,153 428,141 443,135 458,143 468,168 474,173 488,172 498,161 511,156 524,162 538,172 548,173 558,166 568,158 578,169',
    '2,75 15,77 51,66 87,68 101,67 112,59 130,57 147,63 183,70 233,75 251,89 269,113 287,125 308,123 341,128 364,140 391,148 418,148 444,141 458,146 471,156 488,169 504,165 521,159 538,167 554,168 568,165 578,166',
    '2,76 26,73 58,68 94,67 122,62 158,62 194,69 233,73 247,83 265,103 287,118 311,123 334,127 354,129 364,135 391,144 411,149 424,146 451,145 471,151 484,158 508,164 541,163 564,163 578,168',
    '2,84 30,74 55,71 94,70 126,62 151,63 190,68 233,73 251,83 269,93 290,107 308,114 324,123 354,128 368,132 408,146 424,146 454,145 484,153 508,156 531,165 558,166 578,165',
    '2,92 55,70 94,70 122,63 144,63 190,64 233,72 251,78 269,87 287,98 308,106 334,121 354,128 368,131 394,136 408,142 434,145 458,145 484,153 521,155 538,162 551,166 564,163 578,164'
  ],
  volumes: 'g2 r5 r22 r6 r24 r19 g11 g1 r2 r13 g1 r1 g5 0 r1 0 g1 r20 r2 0 r3 g13 0 r15 r51 r8 0 r21 r45 r8 g11 0 0 0 r4 g9 0 r3 r1 0 g6 g13 g1 0 g1 g11 0 r1 0 0 0 0 r1 r1 0 r3 0 r18 g4 g3 0 g12 g3 r2 r2 g18 g2 0 g76 g2 g16 r2 g27 g12 0 0 g8 g4 g1 r4 r2 0 0 0 g2 g1 0 g5 g2 g3 r1 r11 r1 0 g51 g1 g12 0 0 g3 0 g2 r2 0 g5 g1 g8 0 0 g5 0 g1 g10 g7 g8 g7 r1 0 0 0 g11 g34 g2 g3 g1 g2 g10 r4 0 0 g18 g3 g2 g8 0 0 0 0 g2 r4 0 g21 g5 g2',
  hist: '-8 -9 -7 -5 -3 -2 -3 -5 -4 -1 -1 1 -1 -1 -2 -3 -5 -5 -3 -3 -2 -4 -3 -2 0 1 1 2 2 1 1 -1 -3 -5 -4 -4 -4 -4 -4 -2 -1 -2 -3 -3 -1 1 1 1 1 0 0 0 0 1 0 1 0 0 -2 -3 -4 -5 -7 -8 -8 -8 -9 -10 -7 -4 -5 -6 -5 -2 0 2 2 2 2 1 1 2 2 2 1 0 1 0 0 1 -1 -1 0 0 1 0 1 0 1 0 1 0 1 2 3 4 5 5 5 6 6 5 2 1 -2 -4 -4 -5 -5 -5 -4 -3 -3 1 2 3 3 2 2 3 3 3 1 0 0 -1 -2 -1 0 1 1 3 4 4 0 0 1',
  macdLine: '2,333 8,337 23,335 34,340 48,338 59,342 71,348 81,348 91,351 104,348 111,344 121,344 134,354 154,360 174,365 194,362 228,364 241,369 268,390 274,387 286,393 301,384 314,383 331,379 351,379 361,385 371,381 384,380 394,378 411,378 441,361 448,361 464,374 474,378 486,379 498,371 518,366 528,368 538,372 551,370 566,361 574,367',
  deaLine: '2,324 14,331 24,332 36,336 58,338 71,343 94,348 106,348 121,346 148,353 176,361 198,361 228,363 248,368 268,379 291,389 308,386 341,381 351,380 364,382 384,381 418,378 451,367 461,368 486,377 501,374 528,368 551,370 564,367 578,366'
};

const chartB = {
  height: 441, sep: [202, 303], dates: [406, 424], volBase: 301, histBase: 361,
  head: ['時 2018-2-13 15:5:00', '開 12011', '高 12014', '低 12010', '收 12012'],
  sma: ['SMA(5) 12012.60', 'SMA(10) 12024.50', 'SMA(15)'],
  vol: '成交量 18', macd: ['DIF -2.01', 'MACD -8.22', 'DEA(12,26,9) -6.22'],
  axis: [[33, '12200'], [71, '12150', 1], [109, '12100'], [147, '12050', 1], [185, '12000'],
    [218, '1000', 1], [235, '800'], [251, '600', 1], [268, '400'], [284, '200', 1], [301, '0'],
    [326, '20'], [344, '10', 1], [361, '0'], [379, '-10', 1], [397, '-20']],
  ticks: [89, 97, 217, 337, 457, 577],
  times: [[3, '11:38'], [458, '14:30']],
  candles: `0 g 342 347 360 370,1 g 345 348 355 360,2 r 350 353 358 360,3 w 350 362 362 372,4 r 345 350 358 362,5 r 350 358 362 372,6 r 358 362 366 372,7 g 350 365 387 395,8 r 370 378 385 393,9 r 372 375 380 392,10 r 375 378 382 390,11 r 365 378 380 395,12 g 372 380 385 395,13 g 385 390 410 417,14 w 410 412 412 428,15 r 390 403 407 417,16 r 392 395 400 412,17 r 342 345 380 385,18 g 340 345 357 362,19 g 357 362 368 372,20 g 362 368 372 378,21 r 362 368 372 380,22 w 427 427 427 427,23 w 427 427 427 432,24 w 375 395 395 433,25 g 398 400 447 460,26 r 442 447 452 470,27 g 445 448 452 458,28 g 450 458 500 512,29 g 498 510 517 528,30 g 515 518 528 548,31 w 510 527 527 538,32 g 520 530 535 540,33 g 533 537 570 578,34 r 552 562 568 586,35 r 512 515 555 575,36 r 470 490 512 515,37 g 492 497 518 525,38 g 515 522 545 572,39 g 540 548 565 587,40 r 545 550 568 572,41 r 522 533 545 555,42 r 530 533 540 550,43 r 500 515 525 530,44 r 503 507 515 530,45 g 505 510 518 523,46 g 510 515 535 557,47 r 507 512 535 542,48 r 495 497 510 515,49 g 488 500 515 518,50 g 512 517 525 530,51 g 520 525 570 578,52 g 562 570 575 580,53 g 568 572 578 590,54 g 570 573 577 590,55 g 558 572 577 590,56 g 570 575 578 590,57 r 572 575 580 590,58 r 578 582 586 612,59 r 572 577 582 598,60 r 548 567 575 582,61 g 568 575 585 602,62 g 577 587 590 600,63 g 585 592 597 600,64 g 595 598 612 628,65 g 608 612 648 658,66 g 645 648 660 690,67 r 642 650 658 670,68 r 595 598 640 655,69 r 585 597 602 610,70 g 585 590 615 620,71 g 612 630 650 675,72 g 645 650 668 685,73 g 660 668 672 682,74 g 650 670 692 705,75 r 675 683 695 712,76 r 645 652 680 685,77 r 597 600 640 650,78 g 597 600 640 648,79 g 637 642 682 708,80 r 660 678 682 690,81 r 648 660 675 685,82 r 620 633 652 662,83 r 628 632 638 650,84 r 612 623 627 632,85 r 598 602 620 632,86 r 580 583 600 605,87 g 575 582 586 602,88 g 582 592 597 602,89 g 595 598 602 615,90 g 585 600 604 615,91 g 600 612 622 627,92 g 608 615 620 630,93 r 598 602 612 617,94 r 593 596 600 606,95 r 562 582 590 600,96 g 567 583 598 605,97 g 595 603 630 640,98 g 632 635 657 663,99 r 643 653 660 662,100 g 655 658 680 680,101 g 677 680 725 735,102 g 728 730 762 765,103 g 750 762 767 780,104 r 755 757 765 778,105 r 730 733 755 762,106 r 705 712 728 740,107 g 712 715 720 735,108 w 708 718 718 727,109 g 715 717 722 727,110 w 717 722 722 732,111 r 682 685 722 725,112 r 667 668 680 685,113 r 655 660 667 680,114 r 628 633 655 665,115 r 630 631 635 650,116 g 620 632 660 672,117 g 655 662 675 690,118 g 657 678 690 695,119 g 680 690 693 702,120 g 678 688 693 702,121 w 690 698 698 710,122 r 687 690 695 705,123 r 690 693 698 705,124 r 690 692 695 712,125 g 697 700 740 743,126 g 730 732 760 768,127 r 752 753 760 768,128 w 747 759 759 768,129 w 757 758 758 775,130 r 737 740 755 760,131 r 733 737 740 750,132 r 732 733 737 748,133 r 730 735 740 752,134 r 728 730 737 745,135 r 687 700 727 730,136 g 700 705 712 720,137 r 705 710 715 720,138 g 710 713 745 748,139 r 733 740 745 748,140 r 727 730 740 747,141 r 695 703 708 715,142 r 697 702 706 715,143 g 698 708 712 725,144 g 703 713 785 810,145 w 768 787 787 797,146 g 777 780 785 795,147 r 757 765 785 793,148 g 762 767 782 790,149 r 777 782 785 792`,
  lines: [
    '2,32 13,33 30,39 50,43 63,50 83,42 100,49 120,76 137,98 157,91 173,98 197,87 210,98 223,108 243,110 257,112 270,129 283,124 297,129 307,142 323,133 340,133 350,119 360,115 370,121 387,116 400,126 410,149 420,166 430,164 447,153 463,133 477,139 490,146 503,148 520,168 540,161 557,156 573,158 587,169 598,178',
    '2,32 23,33 47,37 63,45 97,44 113,55 133,83 150,92 170,97 187,93 207,89 230,98 257,116 280,121 300,133 313,133 333,138 350,128 367,117 373,118 390,116 403,125 420,146 433,159 443,161 457,153 473,143 483,139 497,140 513,154 537,163 550,159 580,160 598,167',
    '2,34 40,35 70,42 97,44 120,55 137,72 163,92 183,95 203,92 223,96 243,104 270,116 283,117 297,124 317,133 340,134 363,126 383,119 400,120 417,134 437,146 450,153 467,152 483,144 510,144 527,154 537,159 553,159 580,159 598,166',
    '2,37 33,37 70,40 97,43 117,49 133,63 150,73 167,86 190,92 210,93 223,96 257,104 273,113 290,117 310,125 330,129 347,133 363,128 383,123 407,123 427,136 447,144 467,147 483,149 500,146 527,150 547,157 573,159 598,163',
    '2,34 33,36 57,39 90,41 117,48 137,61 157,71 177,81 197,89 223,96 257,101 283,110 310,123 333,128 363,128 373,127 387,125 407,125 427,133 450,140 473,142 490,148 517,150 547,151 573,157 598,164'
  ],
  volumes: 'g15 g3 g3 g4 r2 g6 r5 g10 r6 r6 g7 r7 g7 g16 g10 r4 r13 r17 g6 g5 g7 r5 r2 0 r44 g30 r33 g9 g42 g35 g32 g19 g18 g32 r34 r43 r39 g10 g32 g25 r19 r15 r14 r19 r13 g10 g19 r16 r13 g17 g12 g24 r20 g24 r10 g15 r12 g10 r29 g8 r17 g8 g7 g20 g35 g27 g61 r16 r22 r22 g20 g24 g19 g13 g33 r35 r17 r24 g24 g45 r30 r17 r13 r19 r21 r14 r33 g15 g10 r10 g9 g10 r11 r7 r5 r12 g8 g17 g15 r10 g25 g43 g54 g29 r21 r18 r21 g10 g7 g6 g5 r19 r16 r11 r24 r11 g30 g16 g32 g7 g6 g8 g10 r6 r13 g28 g22 r13 r8 r14 r11 r8 r6 g4 r6 r17 g9 g14 g19 r6 r14 r15 r14 g9 g76 g19 g11 r18 g11 r1',
  hist: '1 1 0 1 0 1 1 -1 -1 -1 -1 -1 -1 -2 -3 -2 -1 0 1 2 1 1 0 -1 -1 -3 -4 -4 -7 -9 -10 -9 -9 -10 -9 -5 -1 0 0 -1 0 1 1 3 5 5 4 5 6 6 5 2 0 1 0 0 0 0 0 0 1 1 1 1 0 -2 -3 -3 0 1 0 1 -1 -1 -2 -2 0 2 3 1 0 1 3 4 5 6 8 8 8 7 6 4 3 3 2 3 3 1 -1 -2 -4 -7 -11 -12 -12 -10 -7 -5 -3 -2 -1 1 3 5 8 9 8 6 4 2 1 0 1 1 1 -1 -3 -4 -4 -4 -3 -1 0 0 0 2 3 3 1 0 1 2 3 2 1 -2 -3 -3 -3 -3',
  macdLine: '2,363 23,364 37,368 53,372 67,372 77,366 87,365 103,373 120,388 138,399 150,392 163,395 180,383 200,374 210,379 233,383 257,380 270,389 283,382 303,389 313,381 327,382 340,374 353,363 373,361 383,358 400,366 413,384 422,389 443,384 457,369 465,364 483,367 500,369 510,376 523,378 547,369 567,369 573,365 583,373 598,377',
  deaLine: '2,364 23,363 47,366 67,370 87,367 107,370 123,379 140,390 153,393 172,393 190,386 207,379 230,380 257,381 273,385 290,383 305,387 323,383 340,379 360,368 380,363 400,362 410,369 423,379 440,384 450,383 473,370 500,368 527,375 553,373 577,369 598,373'
};

function text(x, y, str, color, cls) {
  return `<text x="${x}" y="${y}" fill="${color}" class="${cls || ''}">${str}</text>`;
}

function rect(x, y, w, h, color) {
  return `<rect x="${x}" y="${y}" width="${w}" height="${h}" fill="${color}"/>`;
}

// hollow 3px bar for rising candles and volumes
function hollow(x, y, h) {
  if (h < 3) return rect(x, y, 3, h, COLORS.r);
  return rect(x, y, 3, h, COLORS.r) + rect(x + 1, y + 1, 1, h - 2, '#000');
}

function poly(points, color) {
  return `<polyline points="${points}" fill="none" stroke="${color}"/>`;
}

function drawChart(id, d) {
  const el = document.getElementById(id);
  const W = el.clientWidth;
  const axisX = W - 54;
  let out = '';

  for (const [y, label, dashed] of d.axis) {
    if (dashed) {
      out += `<path d="M0 ${y + 0.5}H${axisX}" stroke="#800000" stroke-dasharray="3 3"/>`;
    }
    out += rect(axisX, y, 3, 1, '#fff');
  }

  const down = y => Math.round(y / 3) - 84;
  for (const row of d.candles.split(',')) {
    const [i, c, hi, top, bottom, lo] = row.split(' ');
    const x = 1 + i * PITCH;
    const y1 = down(top);
    const h = Math.max(1, down(bottom) - y1 + 1);
    out += rect(x + 1, down(hi), 1, down(lo) - down(hi) + 1, COLORS[c]);
    out += c === 'r' ? hollow(x, y1, h) : rect(x, y1, 3, h, COLORS[c]);
  }
  d.lines.forEach((line, n) => out += poly(line, SMA[n]));

  d.volumes.split(' ').forEach((v, i) => {
    const h = Number(v.slice(1));
    const x = 1 + i * PITCH;
    if (h) out += v[0] === 'r' ? hollow(x, d.volBase - h, h) : rect(x, d.volBase - h, 3, h, COLORS.g);
  });

  d.hist.split(' ').forEach((v, i) => {
    if (v > 0) out += rect(1 + i * PITCH, d.histBase - v, 3, v, '#ff8000');
    if (v < 0) out += rect(1 + i * PITCH, d.histBase, 3, -v, '#ff8000');
  });
  out += poly(d.macdLine, '#800000') + poly(d.deaLine, '#008000');

  out += rect(axisX, 0, 1, d.dates[0], '#fff');
  for (const y of d.sep) out += rect(0, y - 1, W, 2, '#800000');
  for (const [y, label] of d.axis) out += text(W - 1, y + 6, label, '#fff', 'axis');

  // date rows
  for (const y of d.dates) out += rect(0, y, W, 1, '#fff');
  out += rect(1, d.dates[0], 1, d.height - d.dates[0], '#fff');
  for (const x of d.ticks) out += rect(x, d.dates[0], 1, 4, '#fff');
  out += text(3, d.dates[0] + 13, '2018-2-13', '#fff');
  for (const [x, t] of d.times) out += text(x, d.dates[1] + 14, t, '#fff');

  [4, 114, 166, 218, 270].forEach((x, n) => {
    out += text(x, 11, `<tspan>${d.head[n][0]}</tspan>${d.head[n].slice(1)}`, '#fff');
  });
  [420, 530, 640].forEach((x, n) => out += text(x, 11, d.sma[n], ['#800000', '#0000ff', '#808000'][n]));
  out += text(10, d.sep[0] + 12, d.vol, '#fff', 'wide');
  [10, 110, 210].forEach((x, n) => out += text(x, d.sep[1] + 12, d.macd[n], ['#ff8000', '#800000', '#008000'][n]));

  el.innerHTML = `<svg width="${W}" height="${d.height}" shape-rendering="crispEdges">${out}</svg>`;
}

function drawAll() {
  drawChart('chartA', chartA);
  drawChart('chartB', chartB);
}

drawAll();
window.addEventListener('resize', drawAll);
```
